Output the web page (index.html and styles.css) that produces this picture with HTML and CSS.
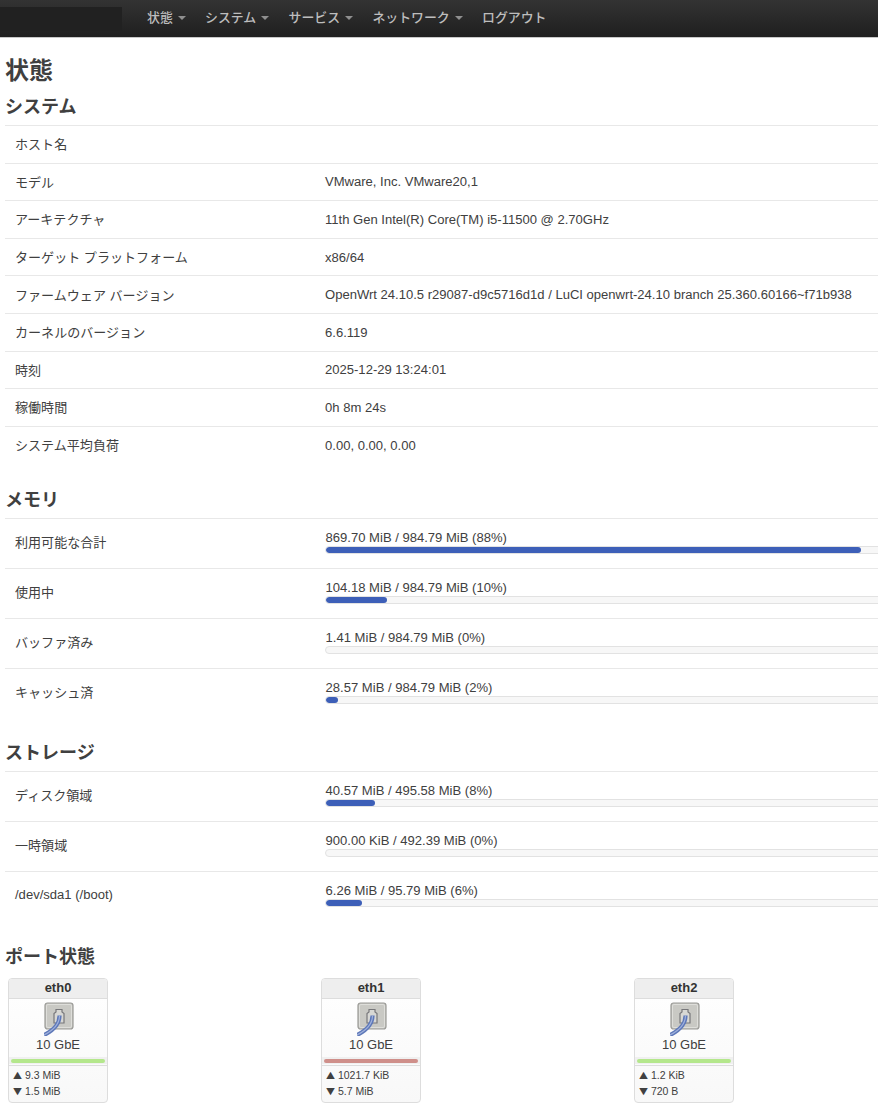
FILE: index.html
```html
<!DOCTYPE html>
<html lang="ja">
<head>
<meta charset="utf-8">
<title>状態</title>
<link rel="stylesheet" href="styles.css">
</head>
<body>
<svg class="defs" width="0" height="0" aria-hidden="true">
  <symbol id="port" viewBox="0 0 32 34">
    <rect x="1" y="1" width="28" height="26" rx="2.5" fill="#c9c9c4" stroke="#9a9a96" stroke-width="1.2"/>
    <rect x="2.5" y="2.5" width="25" height="23" rx="1.5" fill="none" stroke="#dededa" stroke-width="1"/>
    <path d="M10 21V11.500L12 10V7.500H18V10L20 11.500V21Z" fill="#d8d8d4" stroke="#77777a" stroke-width="1.200"/>
    <path d="M15.500 13.500C15.500 21 12 27 0 33" fill="none" stroke="#5e78b8" stroke-width="4.200"/>
    <path d="M15.500 13.500C15.500 21 12 27 0 33" fill="none" stroke="#9fb1dc" stroke-width="1.200"/>
  </symbol>
</svg>
<header class="navbar">
  <div class="brand"></div>
  <nav class="menu">
    <a class="item has-caret">状態</a>
    <a class="item has-caret">システム</a>
    <a class="item has-caret">サービス</a>
    <a class="item has-caret">ネットワーク</a>
    <a class="item">ログアウト</a>
  </nav>
</header>
<main class="content">
  <h1>状態</h1>
  <section>
    <h3>システム</h3>
    <table class="info">
      <tr><td>ホスト名</td><td></td></tr>
      <tr><td>モデル</td><td>VMware, Inc. VMware20,1</td></tr>
      <tr><td>アーキテクチャ</td><td>11th Gen Intel(R) Core(TM) i5-11500 @ 2.70GHz</td></tr>
      <tr><td>ターゲット プラットフォーム</td><td>x86/64</td></tr>
      <tr><td>ファームウェア バージョン</td><td>OpenWrt 24.10.5 r29087-d9c5716d1d / LuCI openwrt-24.10 branch 25.360.60166~f71b938</td></tr>
      <tr><td>カーネルのバージョン</td><td>6.6.119</td></tr>
      <tr><td>時刻</td><td>2025-12-29 13:24:01</td></tr>
      <tr><td>稼働時間</td><td>0h 8m 24s</td></tr>
      <tr><td>システム平均負荷</td><td>0.00, 0.00, 0.00</td></tr>
    </table>
  </section>
  <section>
    <h3>メモリ</h3>
    <table class="info bars">
      <tr><td>利用可能な合計</td><td><div class="label">869.70 MiB / 984.79 MiB (88%)</div><div class="bar"><div class="fill" style="width:88%"></div></div></td></tr>
      <tr><td>使用中</td><td><div class="label">104.18 MiB / 984.79 MiB (10%)</div><div class="bar"><div class="fill" style="width:10%"></div></div></td></tr>
      <tr><td>バッファ済み</td><td><div class="label">1.41 MiB / 984.79 MiB (0%)</div><div class="bar"></div></td></tr>
      <tr><td>キャッシュ済</td><td><div class="label">28.57 MiB / 984.79 MiB (2%)</div><div class="bar"><div class="fill" style="width:2%"></div></div></td></tr>
    </table>
  </section>
  <section>
    <h3>ストレージ</h3>
    <table class="info bars">
      <tr><td>ディスク領域</td><td><div class="label">40.57 MiB / 495.58 MiB (8%)</div><div class="bar"><div class="fill" style="width:8%"></div></div></td></tr>
      <tr><td>一時領域</td><td><div class="label">900.00 KiB / 492.39 MiB (0%)</div><div class="bar"></div></td></tr>
      <tr><td>/dev/sda1 (/boot)</td><td><div class="label">6.26 MiB / 95.79 MiB (6%)</div><div class="bar"><div class="fill" style="width:6%"></div></div></td></tr>
    </table>
  </section>
  <section>
    <h3>ポート状態</h3>
    <div class="ports">
      <article class="port">
        <div class="port-name">eth0</div>
        <div class="port-main"><svg class="port-icon"><use href="#port"/></svg><div class="speed">10 GbE</div></div>
        <div class="link up"><span></span></div>
        <div class="traffic"><div><span class="arrow">▲</span> 9.3 MiB</div><div><span class="arrow">▼</span> 1.5 MiB</div></div>
      </article>
      <article class="port">
        <div class="port-name">eth1</div>
        <div class="port-main"><svg class="port-icon"><use href="#port"/></svg><div class="speed">10 GbE</div></div>
        <div class="link warn"><span></span></div>
        <div class="traffic"><div><span class="arrow">▲</span> 1021.7 KiB</div><div><span class="arrow">▼</span> 5.7 MiB</div></div>
      </article>
      <article class="port">
        <div class="port-name">eth2</div>
        <div class="port-main"><svg class="port-icon"><use href="#port"/></svg><div class="speed">10 GbE</div></div>
        <div class="link up"><span></span></div>
        <div class="traffic"><div><span class="arrow">▲</span> 1.2 KiB</div><div><span class="arrow">▼</span> 720 B</div></div>
      </article>
    </div>
  </section>
</main>
</body>
</html>
```
FILE: styles.css
```css
* { box-sizing: border-box; }
html, body { margin: 0; height: 1120px; overflow: hidden; background: #fff; }
body {
  font-family: "Liberation Sans", "Noto Sans CJK JP", sans-serif;
  font-size: 13.05px;
  color: #404040;
}
.defs { position: absolute; }
.navbar {
  display: flex;
  height: 38px;
  background: linear-gradient(#333, #1f1f1f);
  border-bottom: 1px solid #c8c8c8;
}
.brand {
  width: 122px;
  height: 24px;
  margin-top: 7px;
  background: #212121;
}
.menu { display: flex; margin-left: 25px; gap: 19.3px; align-items: center; height: 33px; }
.item { color: #bdbdbd; font-size: 12.9px; font-weight: 500; white-space: nowrap; }
.has-caret::after {
  content: "";
  display: inline-block;
  margin-left: 5px;
  vertical-align: 2px;
  border-top: 4px solid #8f8f8f;
  border-left: 4px solid transparent;
  border-right: 4px solid transparent;
}
.content { padding: 18px 0 0 5px; }
h1 { margin: 0 0 8px; font-size: 24px; line-height: 30px; color: #404040; }
h3 { margin: 0 0 5px; font-size: 18px; line-height: 26px; color: #404040; }
section { margin-bottom: 23px; }
.info { width: 930px; table-layout: fixed; border-collapse: collapse; }
.info tr { height: 37.6px; border-top: 1px solid #e8e8e8; }
.info.bars tr { height: 50px; }
.info.bars tr:last-child { height: 49px; }
.info td { padding: 0 0 0 10px; vertical-align: middle; white-space: nowrap; }
.info td:first-child { width: 310px; padding-bottom: 1px; }
.bars td { padding-bottom: 2px; }
.bars td:first-child { padding-bottom: 4px; }
.label { line-height: 15px; margin: -1px 0 0 0.6px; }
.bar {
  height: 8px;
  width: 610px;
  margin-top: 1px;
  overflow: hidden;
  background: #f7f7f7;
  border: 1px solid #e2e2e2;
  border-radius: 4px;
}
.fill { height: 100%; background: #3d5fb8; border-radius: 3px; }
.ports { display: grid; grid-template-columns: repeat(3, 313px); padding: 3px 0 0 3px; }
.port {
  width: 100px;
  height: 125px;
  border: 1px solid #ddd;
  border-radius: 4px;
  background: linear-gradient(#fff, #f8f8f8);
}
.port-name {
  height: 20px;
  background: #eee;
  border-bottom: 1px solid #ddd;
  border-radius: 3px 3px 0 0;
  font-size: 13px;
  font-weight: 700;
  line-height: 18px;
  text-align: center;
  color: #333;
}
.port-main { text-align: center; padding-top: 3px; height: 58px; }
.port-icon { display: block; width: 32px; height: 34px; margin: 0 0 0 35px; }
.speed { font-size: 13px; line-height: 14px; margin-top: 2px; }
.link { height: 7px; padding: 2px 2px 1px; background: #f0f0f0; }
.link span { display: block; height: 4px; border-radius: 2px; }
.link.up span { background: #b4e78c; }
.link.warn span { background: #cf8f8a; }
.traffic {
  border-top: 1px solid #ddd;
  margin-top: 1px;
  padding: 1px 5px 0 4px;
  font-size: 10.5px;
  line-height: 16px;
}
.arrow { font-size: 9px; line-height: 1; font-family: "Noto Sans CJK JP", sans-serif; }
```
